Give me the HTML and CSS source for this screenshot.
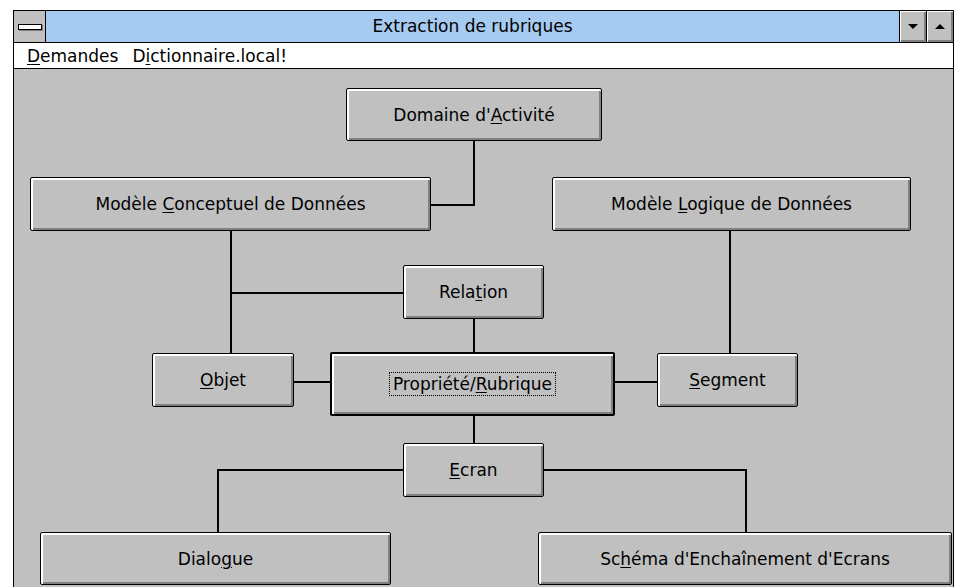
FILE: index.html
```html
<!DOCTYPE html>
<html lang="fr">
<head>
    <meta charset="UTF-8">
    <title>Extraction de rubriques</title>
    <link rel="stylesheet" href="styles.css">
</head>
<body>
    <div class="window">
        <div class="titlebar">
            <div class="sysmenu"><span class="sysbar"></span></div>
            <div class="caption">Extraction de rubriques</div>
            <div class="tbtn"><span class="tri tri-down"></span></div>
            <div class="tbtn"><span class="tri tri-up"></span></div>
        </div>

        <div class="menubar">
            <span class="menu-item"><u>D</u>emandes</span>
            <span class="menu-item">D<u>i</u>ctionnaire.local!</span>
        </div>

        <div class="client">
            <!-- liaisons entre les objets -->
            <svg class="links" width="939" height="530">
                <g stroke="#000" stroke-width="2" fill="none">
                    <polyline points="460,71 460,136 416,136"/>
                    <line x1="217" y1="162" x2="217" y2="284"/>
                    <line x1="217" y1="224" x2="389" y2="224"/>
                    <line x1="460" y1="249" x2="460" y2="283"/>
                    <line x1="716" y1="162" x2="716" y2="284"/>
                    <line x1="280" y1="313" x2="316" y2="313"/>
                    <line x1="601" y1="313" x2="643" y2="313"/>
                    <line x1="460" y1="347" x2="460" y2="374"/>
                    <polyline points="389,401 204,401 204,463"/>
                    <polyline points="530,401 732,401 732,463"/>
                </g>
            </svg>

            <div class="node n-domaine"><span>Domaine d'<u>A</u>ctivité</span></div>
            <div class="node n-mcd"><span>Modèle <u>C</u>onceptuel de Données</span></div>
            <div class="node n-mld"><span>Modèle <u>L</u>ogique de Données</span></div>
            <div class="node n-relation"><span>Rela<u>t</u>ion</span></div>
            <div class="node n-objet"><span><u>O</u>bjet</span></div>
            <div class="node n-propriete default"><span class="focus">Propriété/<u>R</u>ubrique</span></div>
            <div class="node n-segment"><span><u>S</u>egment</span></div>
            <div class="node n-ecran"><span><u>E</u>cran</span></div>
            <div class="node n-dialogue"><span>Dialo<u>g</u>ue</span></div>
            <div class="node n-schema"><span>Sc<u>h</u>éma d'Enchaînement d'Ecrans</span></div>
        </div>
    </div>
</body>
</html>
```

FILE: styles.css
```css
* {
    box-sizing: border-box;
}
body {
    margin: 0;
    background: #fff;
    font-family: "DejaVu Sans", sans-serif;
    font-size: 17px;
    color: #000;
    overflow: hidden;
}
u {
    text-underline-offset: 2px;
}
.window {
    margin: 10px 0 0 13px;
    width: 941px;
    border: 1px solid #000;
    border-bottom: none;
}
.titlebar {
    display: flex;
    height: 32px;
    background: #a6caf0;
    border-bottom: 1px solid #000;
}
.sysmenu {
    width: 32px;
    background: #c0c0c0;
    border-right: 1px solid #000;
    display: flex;
    align-items: center;
    justify-content: center;
}
.sysbar {
    width: 24px;
    height: 6px;
    background: #fff;
    border: 1px solid #000;
    box-shadow: 1px 1px 0 #808080;
}
.caption {
    flex: 1;
    text-align: center;
    line-height: 31px;
}
.tbtn {
    width: 27px;
    background: #c0c0c0;
    border-left: 1px solid #000;
    box-shadow: inset 1px 1px 0 #fff, inset -2px -2px 0 #808080;
    display: flex;
    align-items: center;
    justify-content: center;
}
.tri {
    width: 0;
    height: 0;
    border-left: 5px solid transparent;
    border-right: 5px solid transparent;
}
.tri-down {
    border-top: 5px solid #000;
}
.tri-up {
    border-bottom: 5px solid #000;
}
.menubar {
    display: flex;
    align-items: center;
    height: 26px;
    padding-left: 6px;
    background: #fff;
    border-bottom: 1px solid #000;
}
.menu-item {
    padding: 0 7px;
}
.client {
    position: relative;
    height: 530px;
    background: #c0c0c0;
}
.links {
    position: absolute;
    left: 0;
    top: 0;
}
.node {
    position: absolute;
    display: flex;
    align-items: center;
    justify-content: center;
    background: #c0c0c0;
    border: 1px solid #000;
    border-radius: 2px;
    box-shadow: inset 2px 2px 0 #fff, inset -2px -2px 0 #808080;
    white-space: nowrap;
}
.node.default {
    border-width: 2px;
}
.focus {
    padding: 0 2px;
    outline: 1px dotted #000;
    outline-offset: 1px;
}
.n-domaine   { left: 332px; top: 19px;  width: 256px; height: 53px; }
.n-mcd       { left: 16px;  top: 108px; width: 401px; height: 54px; }
.n-mld       { left: 538px; top: 108px; width: 359px; height: 54px; }
.n-relation  { left: 389px; top: 196px; width: 141px; height: 54px; }
.n-objet     { left: 138px; top: 284px; width: 142px; height: 54px; }
.n-propriete { left: 316px; top: 283px; width: 285px; height: 64px; }
.n-segment   { left: 643px; top: 284px; width: 141px; height: 54px; }
.n-ecran     { left: 389px; top: 374px; width: 141px; height: 54px; }
.n-dialogue  { left: 26px;  top: 463px; width: 351px; height: 53px; }
.n-schema    { left: 524px; top: 463px; width: 414px; height: 53px; }
```
